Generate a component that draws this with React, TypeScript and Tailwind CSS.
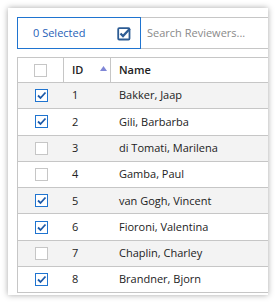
import React from "react";

const rows: { id: number; name: string; checked: boolean }[] = [
  { id: 1, name: "Bakker, Jaap", checked: true },
  { id: 2, name: "Gili, Barbarba", checked: true },
  { id: 3, name: "di Tomati, Marilena", checked: false },
  { id: 4, name: "Gamba, Paul", checked: false },
  { id: 5, name: "van Gogh, Vincent", checked: true },
  { id: 6, name: "Fioroni, Valentina", checked: true },
  { id: 7, name: "Chaplin, Charley", checked: false },
  { id: 8, name: "Brandner, Bjorn", checked: true },
];

function Box({ checked }: { checked: boolean }) {
  if (!checked) {
    return <div className="w-[13px] h-[13px] border border-[#c6c6c6] bg-white" />;
  }
  return (
    <div className="w-[13px] h-[13px] border border-[#1f74d0] bg-white flex items-center justify-center">
      <svg width="11" height="11" viewBox="0 0 11 11">
        <path d="M2 5.5 L4.5 8 L9.5 2.5" fill="none" stroke="#1e5aa8" strokeWidth="1.8" />
      </svg>
    </div>
  );
}

export default function App() {
  return (
    <div className="w-[276px] h-[303px] bg-white pt-[8px] pl-[8px]" style={{ fontFamily: '"Open Sans", sans-serif' }}>
      <div className="w-[260px] h-[287px] bg-white shadow-[0_0_6px_rgba(0,0,0,0.35)] overflow-hidden pl-[9px] pt-[9px] flex flex-col">
        <div className="flex h-[32px] w-[280px] shrink-0">
          <div className="w-[124px] h-full border border-[#1f74d0] flex items-center justify-between pl-[15px] pr-[8px]">
            <span className="text-[11px] text-[#1f62b8]">0 Selected</span>
            <svg width="15" height="15" viewBox="0 0 15 15">
              <rect x="1.2" y="2.2" width="11.3" height="11.3" rx="1" fill="none" stroke="#2d5c94" strokeWidth="1.8" />
              <path d="M3.5 7.5 L6 10 L12.8 2.8" fill="none" stroke="#2d5c94" strokeWidth="2.3" />
            </svg>
          </div>
          <div className="flex-1 h-full border-y border-[#c6c6c6] flex items-center pl-[6px]">
            <span className="text-[11px] text-[#8a8a8a]">Search Reviewers...</span>
          </div>
        </div>
        <div className="mt-[8px] w-[280px] border-l border-[#c6c6c6] text-[11px] text-[#222]">
          <div className="flex h-[26px] border-y border-[#c6c6c6] bg-white">
            <div className="w-[46px] border-r border-[#c6c6c6] flex items-center justify-center">
              <Box checked={false} />
            </div>
            <div className="w-[47px] border-r border-[#c6c6c6] flex items-center pl-[8px] relative font-semibold">
              ID
              <svg className="absolute left-[36px] top-[8px]" width="7" height="5" viewBox="0 0 7 5">
                <path d="M3.5 0 L7 5 L0 5 Z" fill="#7f86d6" />
              </svg>
            </div>
            <div className="flex-1 flex items-center pl-[8px] font-semibold">Name</div>
          </div>
          {rows.map((r, i) => (
            <div
              key={r.id}
              className={`flex h-[26.3px] border-b border-[#c6c6c6] ${i % 2 === 0 ? "bg-[#f3f3f3]" : "bg-white"}`}
            >
              <div className="w-[46px] flex items-center justify-center">
                <Box checked={r.checked} />
              </div>
              <div className="w-[47px] flex items-center pl-[8px]">{r.id}</div>
              <div className="flex-1 flex items-center pl-[8px]">{r.name}</div>
            </div>
          ))}
        </div>
      </div>
    </div>
  );
}
